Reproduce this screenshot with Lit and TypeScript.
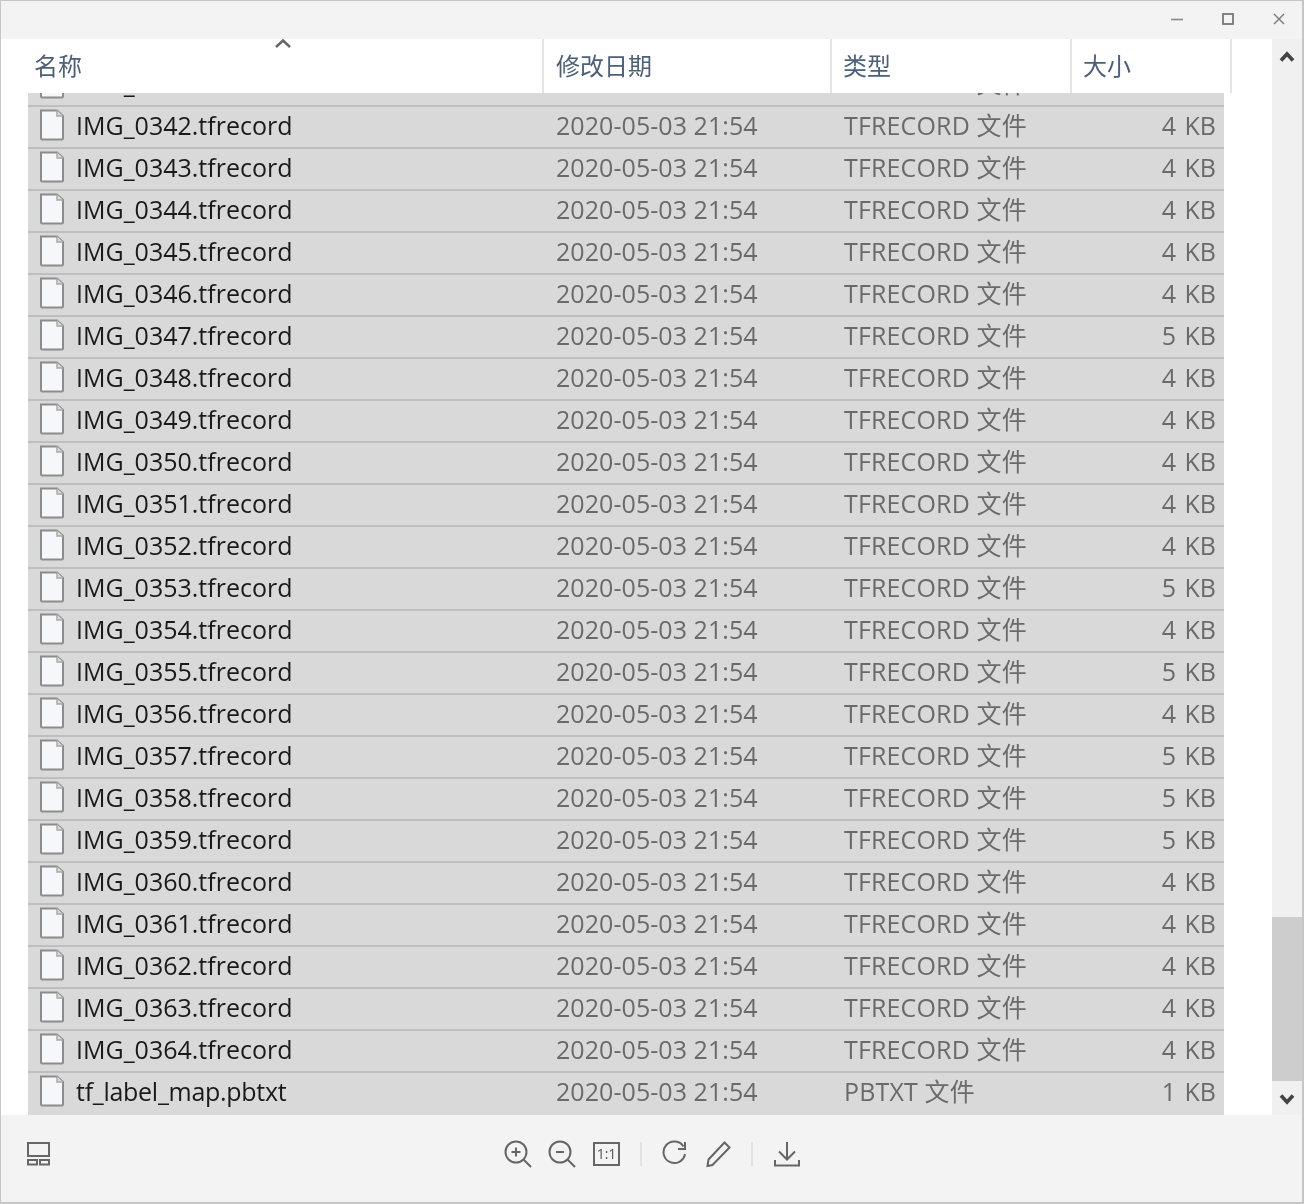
import { LitElement, html, css } from "lit";
import { customElement } from "lit/decorators.js";

type Row = { name: string; type: string; size: string; tight?: boolean };
const sizes: Record<number, number> = { 347: 5, 353: 5, 355: 5, 357: 5, 358: 5, 359: 5 };
const rows: Row[] = [];
for (let i = 341; i <= 364; i++) {
  rows.push({ name: `IMG_0${i}.tfrecord`, type: "TFRECORD 文件", size: `${sizes[i] ?? 4} KB` });
}
rows.push({ name: "tf_label_map.pbtxt", type: "PBTXT 文件", size: "1 KB", tight: true });

const fileIcon = html`<svg class="file" width="26" height="32" viewBox="0 0 26 32">
  <path d="M2 1.5H18L24 7V29a1.5 1.5 0 0 1-1.5 1.5H3.5A1.5 1.5 0 0 1 2 29Z" fill="#f5f7fb" stroke="#8c8c8c" stroke-width="2"/>
  <path d="M18 1.5V7H24" fill="#dcdcdc" stroke="#a8a8a8" stroke-width="1.5"/>
</svg>`;

const st = `fill:none;stroke:#666;stroke-width:2`;

@customElement("app-root")
export class AppRoot extends LitElement {
  static styles = css`
    :host {
      display: block;
      width: 1304px;
      height: 1204px;
      font-family: "Open Sans", "Noto Sans CJK SC", sans-serif;
      overflow: hidden;
    }
    .win {
      box-sizing: border-box;
      width: 1304px;
      height: 1204px;
      border: 1px solid #c6c6c6;
      border-right-width: 2px;
      border-bottom-width: 2px;
      display: grid;
      grid-template-rows: 38px 1076px 87px;
      background: #f3f3f3;
      filter: blur(0.55px);
    }
    .title {
      display: flex;
      justify-content: flex-end;
      align-items: center;
      padding-right: 15px;
      padding-bottom: 2px;
      gap: 35px;
    }
    .title svg { display: block; }
    .main {
      display: grid;
      grid-template-columns: 1271px 30px;
      min-height: 0;
    }
    .content {
      background: #fff;
      display: grid;
      grid-template-rows: 54px 1022px;
      min-height: 0;
    }
    .head {
      display: grid;
      grid-template-columns: 543px 288px 240px 160px;
      position: relative;
    }
    .hc {
      box-sizing: border-box;
      border-right: 2px solid #e4e4e4;
      color: #4c607a;
      font-size: 24px;
      font-family: "Noto Sans CJK SC", sans-serif;
      line-height: 52px;
      height: 54px;
    }
    .hc.a { padding-left: 33px; }
    .hc.b { padding-left: 12px; }
    .hc.c { padding-left: 11px; }
    .hc.d { padding-left: 11px; }
    .caret {
      position: absolute;
      left: 273px;
      top: -2px;
    }
    .list {
      margin-left: 27px;
      width: 1196px;
      display: flex;
      flex-direction: column;
      justify-content: flex-end;
      overflow: hidden;
      min-height: 0;
    }
    .row {
      box-sizing: border-box;
      flex: 0 0 42px;
      height: 42px;
      background: #d9d9d9;
      border-top: 2px solid #bebebe;
      padding-bottom: 4px;
      display: grid;
      grid-template-columns: 48px 480px 288px 1fr auto;
      align-items: center;
      font-size: 25px;
      line-height: 36px;
      color: #6a6a6a;
      white-space: nowrap;
    }
    .row:last-child { flex-basis: 44px; height: 44px; padding-bottom: 6px; }
    .file { display: block; margin-left: 11px; }
    .name { color: #1a1a1a; }
    .name.tight { letter-spacing: -0.28px; }
    .date { letter-spacing: 0.06px; }
    .type { letter-spacing: 0.15px; }
    .size { text-align: right; padding-right: 8px; word-spacing: 2px; }
    .sb {
      background: #f0f0f0;
      display: flex;
      flex-direction: column;
      align-items: stretch;
      justify-content: space-between;
      position: relative;
    }
    .sb svg { display: block; margin: 0 auto; }
    .arrow-up { margin-top: 11px !important; }
    .thumb {
      position: absolute;
      left: 0;
      right: 0;
      top: 878px;
      height: 164px;
      background: #cdcdcd;
    }
    .arrow-down { margin-bottom: 9px !important; }
    .foot {
      display: flex;
      align-items: center;
      padding-left: 26px;
      padding-bottom: 10px;
    }
    .foot svg { display: block; flex: none; }
    .tools {
      display: flex;
      align-items: center;
      gap: 16px;
      margin-left: 453px;
    }
    .tools .div {
      width: 2px;
      height: 24px;
      background: #e2e2e2;
      flex: none;
    }
    .gap4 { margin-left: 4px; }
    .gap3 { margin-left: 3px; }
    .gap2 { margin-left: 2px; }
    .one {
      font-family: "Open Sans", sans-serif;
      font-size: 14px;
      fill: #555;
    }
  `;

  render() {
    return html`<div class="win">
      <div class="title">
        <svg width="16" height="16" viewBox="0 0 16 16"><path d="M2 8.5H14" style="fill:none;stroke:#888;stroke-width:1.6"/></svg>
        <svg width="16" height="16" viewBox="0 0 16 16"><rect x="3" y="3" width="10" height="10" style="fill:none;stroke:#777;stroke-width:1.8"/></svg>
        <svg width="16" height="16" viewBox="0 0 16 16"><path d="M3 3L13 13M13 3L3 13" style="fill:none;stroke:#777;stroke-width:1.4"/></svg>
      </div>
      <div class="main">
        <div class="content">
          <div class="head">
            <div class="hc a">名称</div>
            <div class="hc b">修改日期</div>
            <div class="hc c">类型</div>
            <div class="hc d">大小</div>
            <svg class="caret" width="18" height="12" viewBox="0 0 18 12"><path d="M2 10L9 3.5L16 10" style="fill:none;stroke:#666;stroke-width:2.4"/></svg>
          </div>
          <div class="list">
            ${rows.map(
              (r) => html`<div class="row">
                ${fileIcon}
                <div class="name ${r.tight ? "tight" : ""}">${r.name}</div>
                <div class="date">2020-05-03 21:54</div>
                <div class="type">${r.type}</div>
                <div class="size">${r.size}</div>
              </div>`
            )}
          </div>
        </div>
        <div class="sb">
          <svg class="arrow-up" width="16" height="14" viewBox="0 0 16 14"><path d="M2 10.5L8 4L14 10.5" style="fill:none;stroke:#444;stroke-width:3.6"/></svg>
          <div class="thumb"></div>
          <svg class="arrow-down" width="16" height="14" viewBox="0 0 16 14"><path d="M2 3.5L8 10L14 3.5" style="fill:none;stroke:#444;stroke-width:3.6"/></svg>
        </div>
      </div>
      <div class="foot">
        <svg width="24" height="24" viewBox="0 0 24 24">
          <rect x="1" y="1" width="21" height="13" style="${st}"/>
          <rect x="1" y="18" width="9" height="4.5" style="${st}"/>
          <rect x="13" y="18" width="9" height="4.5" style="${st}"/>
        </svg>
        <div class="tools">
          <svg width="28" height="28" viewBox="0 0 28 28">
            <circle cx="12" cy="12" r="10.5" style="${st}"/>
            <path d="M7.5 12H16.5M12 7.5V16.5M19.5 19.5L27 27" style="${st}"/>
          </svg>
          <svg width="28" height="28" viewBox="0 0 28 28">
            <circle cx="12" cy="12" r="10.5" style="${st}"/>
            <path d="M8 12H16M19.5 19.5L27 27" style="${st}"/>
          </svg>
          <svg width="28" height="28" viewBox="0 0 28 28">
            <rect x="2" y="3" width="25" height="22" style="${st}"/>
            <text class="one" x="14.5" y="19" text-anchor="middle">1:1</text>
          </svg>
          <div class="div gap4"></div>
          <svg class="gap2" width="28" height="28" viewBox="0 0 28 28">
            <path d="M23.5 6.5A10.8 10.8 0 1 0 25 14" style="${st}"/>
            <path d="M25 2V9H18" style="${st}"/>
          </svg>
          <svg width="28" height="28" viewBox="0 0 28 28">
            <path d="M4.5 19.5L20.5 2.5L25.5 7.5L8.5 25L3.5 26Z" style="${st}"/>
          </svg>
          <div class="div gap3"></div>
          <svg class="gap4" width="28" height="28" viewBox="0 0 28 28">
            <path d="M14 2V19M6 11.5L14 19.5L22 11.5M2 20V25.5H26V20" style="${st}"/>
          </svg>
        </div>
      </div>
    </div>`;
  }
}
